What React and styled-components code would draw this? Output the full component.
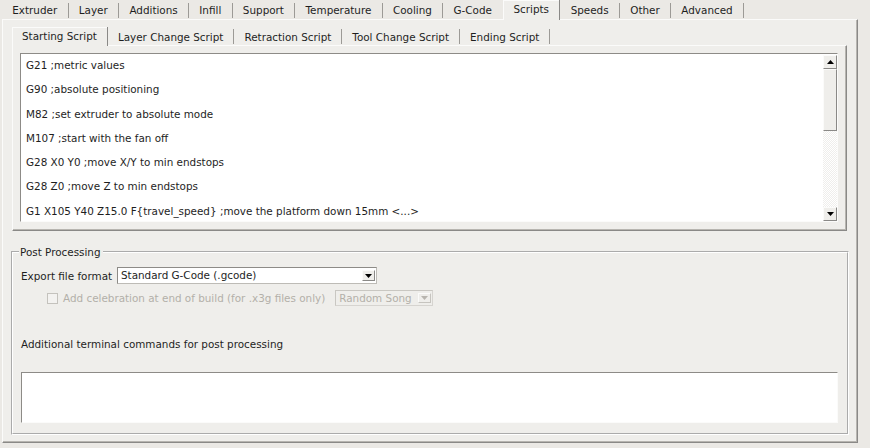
import React from "react";
import styled, { createGlobalStyle } from "styled-components";

const FONT = `"DejaVu Sans", "Liberation Sans", sans-serif`;
const BG = "#ebe9e5";
const PANEL = "#efeeeb";
const DARK = "#8a8987";
const MID = "#b7b5b0";

const Global = createGlobalStyle`
  html, body { margin: 0; padding: 0; background: ${BG}; }
  body { font-family: ${FONT}; }
  * { box-sizing: border-box; }
`;

const Window = styled.div`
  width: 870px;
  height: 448px;
  overflow: hidden;
  background: ${BG};
  font-family: ${FONT};
  font-size: 10.4px;
  color: #1e1e1e;
  display: flex;
  flex-direction: column;
`;

const TabStrip = styled.div`
  position: relative;
  z-index: 1;
  display: flex;
  align-items: flex-start;
  height: ${(p) => p.$h}px;
  padding-left: ${(p) => p.$left}px;
  flex-shrink: 0;
`;

const Tab = styled.div`
  padding: 0 ${(p) => p.$pad}px;
  white-space: nowrap;
  margin-top: ${(p) => (p.$active ? 0 : p.$inset)}px;
  height: ${(p) => (p.$active ? p.$h + 1 : p.$h - p.$inset - 1)}px;
  line-height: ${(p) => (p.$active ? p.$h - 1 + p.$shift : p.$h - p.$inset - 1 + p.$shift)}px;
  background: ${(p) => (p.$active ? PANEL : "transparent")};
  border-right: 1px solid ${(p) => (p.$active ? DARK : p.$noSep ? "transparent" : "#9c9a96")};
  box-shadow: ${(p) => (p.$active ? "inset 1px 1px 0 #fbfbfa" : "none")};
`;

const OuterPanel = styled.div`
  margin-left: 2px;
  width: 856px;
  height: 424px;
  background: ${PANEL};
  border-top: 1px solid #fbfbfa;
  border-left: 1px solid #fbfbfa;
  border-right: 1px solid ${DARK};
  border-bottom: 1px solid ${DARK};
  box-shadow: inset -1px -1px 0 ${MID};
  padding: 7px 0 0 9px;
  display: flex;
  flex-direction: column;
`;

const SubNotebook = styled.div`
  width: 835px;
  display: flex;
  flex-direction: column;
`;

const SubPanel = styled.div`
  height: 186px;
  background: ${PANEL};
  border-top: 1px solid #fbfbfa;
  border-left: 1px solid #fbfbfa;
  border-right: 1px solid ${DARK};
  border-bottom: 1px solid ${DARK};
  box-shadow: inset -1px -1px 0 ${MID};
  padding: 7px 0 0 7px;
`;

const TextBox = styled.div`
  width: ${(p) => p.$w}px;
  height: ${(p) => p.$h}px;
  background: #fff;
  border-top: 1px solid #8d8b87;
  border-left: 1px solid #8d8b87;
  border-right: 1px solid #fbfbfa;
  border-bottom: 1px solid #fbfbfa;
  display: flex;
  overflow: hidden;
`;

const Lines = styled.div`
  flex: 1;
  display: flex;
  flex-direction: column;
  gap: 4.3px;
  padding: 1px 5px 0 5px;
  overflow: hidden;
`;

const Line = styled.div`
  line-height: 20px;
  height: 20px;
  white-space: nowrap;
`;

const Scrollbar = styled.div`
  width: 14px;
  margin-top: 1px;
  display: flex;
  flex-direction: column;
  background-color: #fff;
  background-image: repeating-conic-gradient(#efeeec 0 25%, #ffffff 0 50%);
  background-size: 2px 2px;
`;

const Raised = styled.div`
  flex-shrink: 0;
  height: ${(p) => p.$h}px;
  background: ${PANEL};
  border-top: 1px solid #fbfbfa;
  border-left: 1px solid #fbfbfa;
  border-right: 1px solid ${DARK};
  border-bottom: 1px solid ${DARK};
  display: flex;
  align-items: center;
  justify-content: center;
`;

const Track = styled.div`
  flex: 1;
`;

const GroupBox = styled.fieldset`
  margin: 14px 0 0 -1px;
  width: 838px;
  border: 2px groove #ffffff;
  padding: 0 8px 10px 8px;
  min-width: 0;
  display: flex;
  flex-direction: column;
`;

const Legend = styled.legend`
  margin-left: -2px;
  padding: 0 2px 0 1px;
  line-height: 14px;
  font-size: 10.4px;
`;

const FormRow = styled.div`
  margin-top: 8px;
  height: 17px;
  display: flex;
  align-items: center;
`;

const Label = styled.div`
  width: 96px;
  white-space: nowrap;
  padding-top: 1px;
`;

const Combo = styled.div`
  width: ${(p) => p.$w}px;
  height: ${(p) => p.$h}px;
  background: ${(p) => (p.$disabled ? PANEL : "#fff")};
  color: ${(p) => (p.$disabled ? "#b3b0a9" : "inherit")};
  border: 1px solid ${(p) => (p.$disabled ? "#c9c7c2" : "#8d8b87")};
  border-right-color: ${(p) => (p.$disabled ? "#d6d4d0" : "#bdbbb6")};
  border-bottom-color: ${(p) => (p.$disabled ? "#d6d4d0" : "#bdbbb6")};
  display: flex;
  align-items: stretch;
  padding: 2px 0 2px 3px;
`;

const ComboText = styled.div`
  flex: 1;
  line-height: ${(p) => p.$lh}px;
  margin-top: -2px;
  white-space: nowrap;
`;

const ComboButton = styled.div`
  width: 13px;
  margin-right: ${(p) => p.$mr}px;
  background: ${PANEL};
  border-top: 1px solid #fbfbfa;
  border-left: 1px solid #fbfbfa;
  border-right: 1px solid ${(p) => (p.$disabled ? "#c6c4bf" : DARK)};
  border-bottom: 1px solid ${(p) => (p.$disabled ? "#c6c4bf" : DARK)};
  display: flex;
  align-items: center;
  justify-content: center;
`;

const CheckRow = styled.div`
  margin-top: 6px;
  height: 16px;
  display: flex;
  align-items: center;
  padding-left: 26px;
  color: #b3b0a9;
`;

const CheckBox = styled.div`
  width: 11px;
  height: 11px;
  border: 1px solid #c4c2bd;
  background: #f3f2f0;
  margin-right: 5px;
`;

const CheckText = styled.div`
  white-space: nowrap;
  margin-right: 10px;
`;

const SectionLabel = styled.div`
  margin-top: 31px;
  line-height: 14px;
  height: 14px;
`;

const TextBox2 = styled(TextBox)`
  margin-top: 21px;
`;

const Arrow = ({ down, color = "#000" }) => (
  <svg width="7" height="4" viewBox="0 0 7 4">
    {down ? (
      <polygon points="0,0 7,0 3.5,4" fill={color} />
    ) : (
      <polygon points="0,4 7,4 3.5,0" fill={color} />
    )}
  </svg>
);

const mainTabs = [
  "Extruder",
  "Layer",
  "Additions",
  "Infill",
  "Support",
  "Temperature",
  "Cooling",
  "G-Code",
  "Scripts",
  "Speeds",
  "Other",
  "Advanced",
];
const subTabs = [
  "Starting Script",
  "Layer Change Script",
  "Retraction Script",
  "Tool Change Script",
  "Ending Script",
];
const script = [
  "G21 ;metric values",
  "G90 ;absolute positioning",
  "M82 ;set extruder to absolute mode",
  "M107 ;start with the fan off",
  "G28 X0 Y0 ;move X/Y to min endstops",
  "G28 Z0 ;move Z to min endstops",
  "G1 X105 Y40 Z15.0 F{travel_speed} ;move the platform down 15mm <...>",
];

export default function App() {
  const activeMain = 8;
  const activeSub = 0;
  return (
    <>
      <Global />
      <Window>
        <TabStrip $h={19} $left={2}>
          {mainTabs.map((t, i) => (
            <Tab
              key={t}
              $h={19}
              $inset={3}
              $pad={10.3}
              $shift={0}
              $active={i === activeMain}
              $noSep={i === activeMain - 1}
            >
              {t}
            </Tab>
          ))}
        </TabStrip>
        <OuterPanel>
          <SubNotebook>
            <TabStrip $h={18} $left={0}>
              {subTabs.map((t, i) => (
                <Tab
                  key={t}
                  $h={18}
                  $inset={2}
                  $pad={10}
                  $shift={2}
                  $active={i === activeSub}
                  $noSep={i === activeSub - 1}
                >
                  {t}
                </Tab>
              ))}
            </TabStrip>
            <SubPanel>
              <TextBox $w={818} $h={169}>
                <Lines>
                  {script.map((l) => (
                    <Line key={l}>{l}</Line>
                  ))}
                </Lines>
                <Scrollbar>
                  <Raised $h={14}>
                    <Arrow />
                  </Raised>
                  <Raised $h={62}>
                    <span />
                  </Raised>
                  <Track />
                  <Raised $h={14}>
                    <Arrow down />
                  </Raised>
                </Scrollbar>
              </TextBox>
            </SubPanel>
          </SubNotebook>
          <GroupBox>
            <Legend>Post Processing</Legend>
            <FormRow>
              <Label>Export file format</Label>
              <Combo $w={260} $h={17}>
                <ComboText $lh={15}>Standard G-Code (.gcode)</ComboText>
                <ComboButton $mr={1}>
                  <Arrow down />
                </ComboButton>
              </Combo>
            </FormRow>
            <CheckRow>
              <CheckBox />
              <CheckText>Add celebration at end of build (for .x3g files only)</CheckText>
              <Combo $w={98} $h={16} $disabled>
                <ComboText $lh={14}>Random Song</ComboText>
                <ComboButton $mr={1} $disabled>
                  <Arrow down color="#b8b5af" />
                </ComboButton>
              </Combo>
            </CheckRow>
            <SectionLabel>Additional terminal commands for post processing</SectionLabel>
            <TextBox2 $w={817} $h={51} />
          </GroupBox>
        </OuterPanel>
      </Window>
    </>
  );
}
